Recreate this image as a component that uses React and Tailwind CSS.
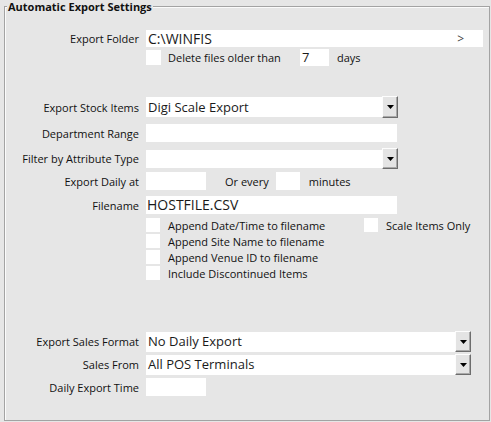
const labelCls = 'w-[134px] shrink-0 text-right text-[11px] leading-none text-[#111]';
const textCls = 'text-[11px] leading-none text-[#111]';

function DropButton({ h = 'h-[22px]' }) {
  return (
    <div
      className={`${h} flex w-[16px] shrink-0 items-center justify-center border border-t-[#fdfdfd] border-l-[#fdfdfd] border-r-[#6d6d6d] border-b-[#6d6d6d] bg-[#e4e4e4] shadow-[inset_-1px_-1px_0_#a9a9a9]`}
    >
      <svg width="7" height="4" viewBox="0 0 7 4">
        <path d="M0 0h7L3.5 4z" fill="#000" />
      </svg>
    </div>
  );
}

function Check({ size = 'w-[14px] h-[14px]' }) {
  return <div className={`${size} shrink-0 bg-white`} />;
}

function CheckRow({ children, right }) {
  return (
    <div className="flex h-[16px] items-center">
      <div className="w-[141px] shrink-0" />
      <Check />
      <span className={`${textCls} ml-[8px] w-[196px] shrink-0`}>{children}</span>
      {right}
    </div>
  );
}

export default function App() {
  return (
    <div
      className="relative h-[422px] w-[491px] overflow-hidden bg-[#e6e6e6]"
      style={{ fontFamily: '"Open Sans", "Noto Sans", sans-serif' }}
    >
      <div className="relative ml-[4px] mt-[6px] h-[415px] w-[486px] border border-[#a3a3a3] shadow-[inset_1px_1px_0_#fbfbfb]">
        <div className="absolute left-[2px] top-[-7px] bg-[#e6e6e6] px-[1px] text-[11px] font-bold leading-[13px] text-[#111]">
          Automatic Export Settings
        </div>

        {/* Export Folder */}
        <div className="mt-[23px] flex h-[17px] items-center">
          <span className={labelCls}>Export Folder</span>
          <div className="ml-[7px] flex h-[17px] w-[337px] items-center justify-between bg-white pl-[2px] pr-[19px] text-[14px] leading-none text-[#1a1a1a]">
            <span>C:\WINFIS</span>
            <span className="text-[12px] text-[#444]">&gt;</span>
          </div>
        </div>

        {/* Delete files */}
        <div className="mt-[2px] flex h-[17px] items-center">
          <div className="w-[141px] shrink-0" />
          <Check size="w-[15px] h-[15px]" />
          <span className={`${textCls} ml-[7px] w-[132px] shrink-0`}>Delete files older than</span>
          <div className="flex h-[17px] w-[29px] items-center bg-white pl-[2px] text-[13px] leading-none text-[#1a1a1a]">7</div>
          <span className={`${textCls} ml-[8px]`}>days</span>
        </div>

        {/* Export Stock Items */}
        <div className="mt-[30px] flex h-[22px] items-center">
          <span className={labelCls}>Export Stock Items</span>
          <div className="ml-[7px] flex h-[20px] w-[236px] items-center bg-white pl-[2px] text-[13px] leading-none text-[#1a1a1a]">
            Digi Scale Export
          </div>
          <DropButton />
        </div>

        {/* Department Range */}
        <div className="mt-[6px] flex h-[18px] items-center">
          <span className={labelCls}>Department Range</span>
          <div className="ml-[7px] h-[18px] w-[251px] bg-white" />
        </div>

        {/* Filter by Attribute Type */}
        <div className="mt-[6px] flex h-[21px] items-center">
          <span className={labelCls}>Filter by Attribute Type</span>
          <div className="ml-[7px] h-[18px] w-[236px] bg-white" />
          <DropButton h="h-[21px]" />
        </div>

        {/* Export Daily at */}
        <div className="mt-[3px] flex h-[18px] items-center">
          <span className={labelCls}>Export Daily at</span>
          <div className="ml-[7px] h-[18px] w-[60px] bg-white" />
          <span className={`${textCls} ml-[19px]`}>Or every</span>
          <div className="ml-[7px] h-[18px] w-[24px] bg-white" />
          <span className={`${textCls} ml-[9px]`}>minutes</span>
        </div>

        {/* Filename */}
        <div className="mt-[6px] flex h-[18px] items-center">
          <span className={labelCls}>Filename</span>
          <div className="ml-[7px] flex h-[18px] w-[251px] items-center bg-white pl-[1px] text-[14px] leading-none text-[#1a1a1a]">
            HOSTFILE.CSV
          </div>
        </div>

        <div className="mt-[3px]">
          <CheckRow
            right={
              <div className="flex items-center">
                <Check />
                <span className={`${textCls} ml-[8px]`}>Scale Items Only</span>
              </div>
            }
          >
            Append Date/Time to filename
          </CheckRow>
          <CheckRow>Append Site Name to filename</CheckRow>
          <CheckRow>Append Venue ID to filename</CheckRow>
          <CheckRow>Include Discontinued Items</CheckRow>
        </div>

        {/* Export Sales Format */}
        <div className="mt-[50px] flex h-[21px] items-center">
          <span className={labelCls}>Export Sales Format</span>
          <div className="ml-[7px] flex h-[20px] w-[309px] items-center bg-white pl-[2px] text-[13px] leading-none text-[#1a1a1a]">
            No Daily Export
          </div>
          <DropButton h="h-[21px]" />
        </div>

        {/* Sales From */}
        <div className="mt-[2px] flex h-[21px] items-center">
          <span className={labelCls}>Sales From</span>
          <div className="ml-[7px] flex h-[20px] w-[309px] items-center bg-white pl-[2px] text-[13px] leading-none text-[#1a1a1a]">
            All POS Terminals
          </div>
          <DropButton h="h-[21px]" />
        </div>

        {/* Daily Export Time */}
        <div className="mt-[3px] flex h-[18px] items-center">
          <span className={labelCls}>Daily Export Time</span>
          <div className="ml-[7px] h-[18px] w-[60px] bg-white" />
        </div>
      </div>
    </div>
  );
}
